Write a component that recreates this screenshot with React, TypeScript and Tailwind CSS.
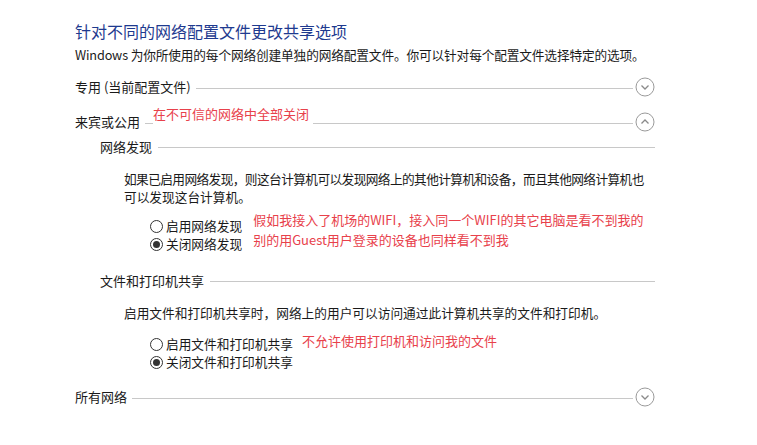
const FONT = "font-['Microsoft_YaHei','Noto_Sans_CJK_SC',sans-serif]"

function Chevron({ up }: { up?: boolean }) {
  return (
    <svg width="20" height="20" viewBox="0 0 20 20" className="shrink-0">
      <circle cx="10" cy="10" r="9" fill="none" stroke="#9a9a9a" strokeWidth="1" />
      {up ? (
        <path d="M6.5 11.5 L10 8 L13.5 11.5" fill="none" stroke="#8a8a8a" strokeWidth="1.3" />
      ) : (
        <path d="M6.5 8.5 L10 12 L13.5 8.5" fill="none" stroke="#8a8a8a" strokeWidth="1.3" />
      )}
    </svg>
  )
}

function Radio({ checked }: { checked?: boolean }) {
  return (
    <span className="w-[13px] h-[13px] rounded-full border border-[#333] bg-white flex items-center justify-center shrink-0 mr-[3px]">
      {checked && <span className="w-[7px] h-[7px] rounded-full bg-[#333]" />}
    </span>
  )
}

function SectionHead({ label, up, note }: { label: string; up?: boolean; note?: string }) {
  return (
    <div className="flex items-center h-[20px] w-[580px] relative">
      <span className="text-[13px] text-[#1a1a1a] whitespace-nowrap mr-[5px]">{label}</span>
      <div className="flex-1 h-px bg-[#c8c8c8] mt-[2px]" />
      <div className="ml-[2px]">
        <Chevron up={up} />
      </div>
      {note && (
        <span className="absolute left-[78px] top-[-8px] text-[13px] text-[#e8414b] bg-white pr-1">{note}</span>
      )}
    </div>
  )
}

function SubHead({ label }: { label: string }) {
  return (
    <div className="flex items-center h-[20px] w-[555px]">
      <span className="text-[13px] text-[#1a1a1a] whitespace-nowrap mr-[6px]">{label}</span>
      <div className="flex-1 h-px bg-[#c8c8c8] mt-[1px]" />
    </div>
  )
}

export default function App() {
  return (
    <div className={`w-[757px] h-[445px] bg-white overflow-hidden ${FONT}`}>
      <div className="pl-[75px] pt-[20px]">
        <h1 className="text-[16px] leading-[22px] text-[#1e3a8f] font-normal">针对不同的网络配置文件更改共享选项</h1>
        <p className="text-[12.7px] leading-[18px] mt-[4px] text-[#1a1a1a] whitespace-nowrap tracking-[-0.15px]">
          Windows 为你所使用的每个网络创建单独的网络配置文件。你可以针对每个配置文件选择特定的选项。
        </p>

        <div className="mt-[13px]">
          <SectionHead label="专用 (当前配置文件)" />
        </div>
        <div className="mt-[15px]">
          <SectionHead label="来宾或公用" up note="在不可信的网络中全部关闭" />
        </div>

        <div className="pl-[25px] mt-[5px]">
          <SubHead label="网络发现" />
          <div className="pl-[24px] mt-[13px] text-[12.7px] leading-[18px] text-[#1a1a1a]">
            <p className="whitespace-nowrap">
              <span className="tracking-[-0.6px]">如果已启用网络发现，则这台计算机可以发现网络上的其他计算机和设备，而且其他网络计算机也</span>
              <br />
              可以发现这台计算机。
            </p>
            <div className="flex mt-[11px]">
              <div className="pl-[26px] flex flex-col">
                <label className="flex items-center h-[18px]">
                  <Radio />
                  启用网络发现
                </label>
                <label className="flex items-center h-[18px]">
                  <Radio checked />
                  关闭网络发现
                </label>
              </div>
              <div className="ml-[11px] -mt-[7px] text-[13px] leading-[20px] text-[#e8414b]">
                <p>假如我接入了机场的WIFI，接入同一个WIFI的其它电脑是看不到我的</p>
                <p>别的用Guest用户登录的设备也同样看不到我</p>
              </div>
            </div>
          </div>

          <div className="mt-[18px]">
            <SubHead label="文件和打印机共享" />
          </div>
          <div className="pl-[24px] mt-[13px] text-[12.7px] leading-[18px] text-[#1a1a1a]">
            <p className="whitespace-nowrap">启用文件和打印机共享时，网络上的用户可以访问通过此计算机共享的文件和打印机。</p>
            <div className="flex mt-[13px]">
              <div className="pl-[26px] flex flex-col">
                <label className="flex items-center h-[18px]">
                  <Radio />
                  启用文件和打印机共享
                </label>
                <label className="flex items-center h-[18px]">
                  <Radio checked />
                  关闭文件和打印机共享
                </label>
              </div>
              <div className="ml-[9px] mt-[-4px] text-[13px] leading-[20px] text-[#e8414b]">
                <p>不允许使用打印机和访问我的文件</p>
              </div>
            </div>
          </div>
        </div>

        <div className="mt-[16px]">
          <SectionHead label="所有网络" />
        </div>
      </div>
    </div>
  )
}
